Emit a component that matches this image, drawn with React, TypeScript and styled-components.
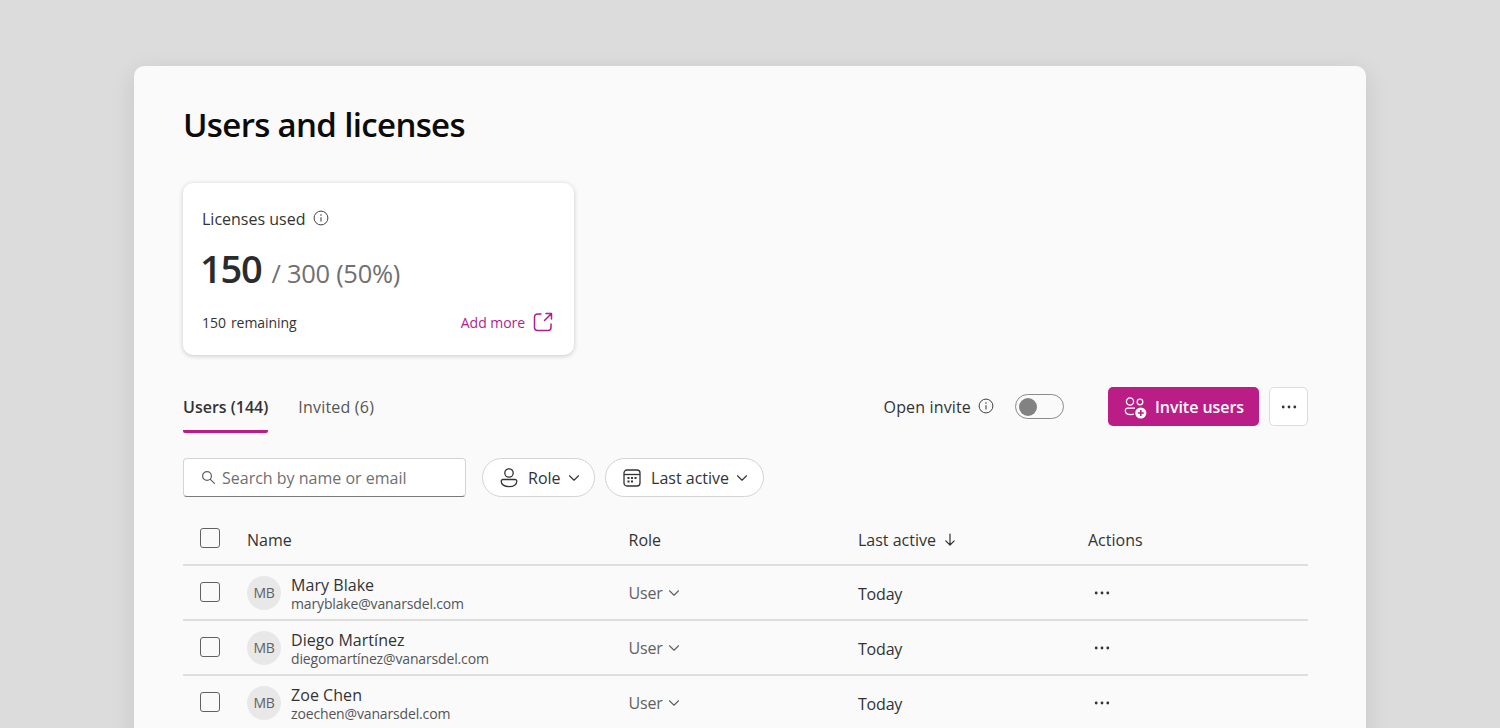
import React from 'react';
import styled, { createGlobalStyle } from 'styled-components';
import { ChevronDown } from 'lucide-react';

const GlobalStyle = createGlobalStyle`
  html, body {
    margin: 0;
    height: 100%;
    overflow: hidden;
    background: #dcdcdc;
  }
  * { box-sizing: border-box; }
  body {
    font-family: "Open Sans", "Noto Sans", "Liberation Sans", sans-serif;
    color: #242424;
  }
`;

const Page = styled.div`
  height: 728px;
  overflow: hidden;
  padding: 66px 134px 0;
`;

const Window = styled.main`
  width: 1232px;
  height: 800px;
  padding: 34px 58px 0 49px;
  background: #fafafa;
  border-radius: 10px;
  box-shadow: 0 6px 24px rgba(0, 0, 0, 0.1);
`;

const Title = styled.h1`
  margin: 0 0 33px;
  height: 50px;
  font-size: 33px;
  line-height: 50px;
  font-weight: 600;
  letter-spacing: -0.65px;
  color: #0b0b0b;
`;

const LicenseCard = styled.section`
  width: 391px;
  height: 172px;
  padding: 24px 21px 0 19px;
  background: #fff;
  border-radius: 10px;
  box-shadow: 0 1px 5px rgba(0, 0, 0, 0.2);
`;

const CardLabel = styled.div`
  display: flex;
  align-items: center;
  gap: 8px;
  height: 24px;
  font-size: 16px;
  letter-spacing: 0;
  color: #333;

  svg {
    margin-top: -2px;
  }
`;

const Figures = styled.div`
  display: flex;
  align-items: baseline;
  gap: 10px;
  height: 54px;
  margin: 14px 0 0 -2px;
  line-height: 46px;
`;

const Big = styled.span`
  font-size: 38px;
  font-weight: 600;
  letter-spacing: -1.2px;
  color: #2b2b2b;
`;

const Total = styled.span`
  font-size: 25.5px;
  font-weight: 400;
  letter-spacing: -0.3px;
  color: #707070;
`;

const CardFooter = styled.div`
  display: flex;
  align-items: center;
  justify-content: space-between;
  height: 24px;
  margin-top: 11px;
  font-size: 14px;
  letter-spacing: -0.05px;
  color: #333;
`;

const Remaining = styled.span`
  word-spacing: 1.5px;
`;

const AddMore = styled.a`
  display: flex;
  align-items: center;
  gap: 8px;
  color: #b01e8c;
`;

const TabBar = styled.div`
  display: flex;
  align-items: flex-start;
  justify-content: space-between;
  height: 46px;
  margin-top: 32px;
`;

const Tabs = styled.nav`
  display: flex;
  gap: 30px;
`;

const Tab = styled.button<{ $active?: boolean }>`
  display: flex;
  align-items: flex-start;
  height: 46px;
  padding: 8px 0 0;
  border: none;
  border-bottom: 3px solid ${(p) => (p.$active ? '#bb1d86' : 'transparent')};
  border-radius: 2px;
  background: none;
  font-family: inherit;
  font-size: 16px;
  line-height: 24px;
  letter-spacing: ${(p) => (p.$active ? '0' : '0.2px')};
  font-weight: ${(p) => (p.$active ? 600 : 400)};
  color: ${(p) => (p.$active ? '#333' : '#555')};
`;

const TabActions = styled.div`
  display: flex;
  align-items: center;
  height: 39px;
`;

const OpenInvite = styled.span`
  display: flex;
  align-items: center;
  gap: 7px;
  margin-right: 21px;
  font-size: 16px;
  letter-spacing: 0.15px;
  color: #333;

  svg {
    margin-top: -2px;
  }
`;

const Toggle = styled.span`
  display: flex;
  align-items: center;
  width: 49px;
  height: 25px;
  padding-left: 3px;
  margin-right: 44px;
  border: 1.5px solid #8a8a8a;
  border-radius: 13px;

  &::before {
    content: '';
    width: 18px;
    height: 18px;
    border-radius: 50%;
    background: #828282;
  }
`;

const InviteButton = styled.button`
  display: flex;
  align-items: center;
  gap: 8px;
  width: 151px;
  height: 39px;
  padding: 0 0 0 15px;
  border: none;
  border-radius: 5px;
  background: #bb1d86;
  color: #fff;
  font-family: inherit;
  font-size: 16px;
  font-weight: 600;
  letter-spacing: -0.05px;
`;

const MoreButton = styled.button`
  display: flex;
  align-items: center;
  justify-content: center;
  width: 39px;
  height: 39px;
  margin-left: 10px;
  padding: 0;
  border: 1px solid #dcdcdc;
  border-radius: 5px;
  background: #fff;
`;

const FilterBar = styled.div`
  display: flex;
  gap: 10px;
  margin-top: 25px;
`;

const SearchBox = styled.label`
  display: flex;
  align-items: center;
  gap: 6px;
  width: 283px;
  height: 39px;
  margin-right: 6px;
  padding-left: 17px;
  background: #fff;
  border: 1px solid #d4d4d4;
  border-bottom: 1.5px solid #7a7a7a;
  border-radius: 4px;
  font-size: 16px;
  letter-spacing: 0;
  color: #707070;
`;

const FilterPill = styled.button`
  display: flex;
  align-items: center;
  gap: 9px;
  height: 39px;
  padding: 0 11.5px 0 16px;
  background: #fff;
  border: 1px solid #d4d4d4;
  border-radius: 20px;
  font-family: inherit;
  font-size: 16px;
  letter-spacing: 0;
  color: #333;

  > svg:last-child {
    margin-left: -5px;
  }
`;

const Table = styled.div`
  margin-top: 24px;
  width: 1125px;
`;

const Row = styled.div<{ $head?: boolean }>`
  display: grid;
  grid-template-columns: 64px 381.5px 229.5px 230px 220px;
  align-items: center;
  height: ${(p) => (p.$head ? '45px' : '55px')};
  padding-bottom: ${(p) => (p.$head ? '6px' : '0')};
  border-bottom: 2px solid #dedede;
`;

const Check = styled.span<{ $lift?: boolean }>`
  display: block;
  width: 20px;
  height: 20px;
  margin-left: 17px;
  margin-top: ${(p) => (p.$lift ? '-3px' : '-1px')};
  border: 1.5px solid #616161;
  border-radius: 3px;
`;

const HeadCell = styled.div`
  display: flex;
  align-items: center;
  gap: 8px;
  font-size: 16px;
  letter-spacing: 0;
  color: #333;
`;

const Person = styled.div`
  display: flex;
  align-items: center;
  gap: 10px;
`;

const Avatar = styled.span`
  display: flex;
  align-items: center;
  justify-content: center;
  width: 34px;
  height: 34px;
  border-radius: 50%;
  background: #e8e8e8;
  font-size: 14px;
  font-weight: 500;
  letter-spacing: -0.2px;
  color: #616161;
`;

const PersonText = styled.div`
  margin-top: 2px;
`;

const PersonName = styled.div`
  font-size: 16px;
  line-height: 20px;
  letter-spacing: 0.05px;
  color: #333;
`;

const PersonMail = styled.div`
  font-size: 14px;
  line-height: 17px;
  letter-spacing: -0.15px;
  color: #555;
`;

const RoleCell = styled.div`
  display: flex;
  align-items: center;
  gap: 2px;
  font-size: 16px;
  letter-spacing: -0.2px;
  color: #616161;
`;

const DateCell = styled.div`
  margin-top: 2px;
  font-size: 16px;
  letter-spacing: -0.2px;
  color: #333;
`;

const ActionCell = styled.div`
  display: flex;
  padding-left: 6px;
  margin-top: 1px;
`;

const InfoIcon = () => (
  <svg width="16" height="16" viewBox="0 0 16 16" fill="none" stroke="#424242">
    <circle cx="8" cy="8" r="6.9" />
    <path d="M8 7.2v4.2" strokeWidth="1.1" />
    <circle cx="8" cy="5" r="0.8" fill="#424242" stroke="none" />
  </svg>
);

const Dots = () => (
  <svg width="16" height="4" viewBox="0 0 16 4" fill="#333">
    <circle cx="2.2" cy="2" r="1.4" />
    <circle cx="8" cy="2" r="1.4" />
    <circle cx="13.8" cy="2" r="1.4" />
  </svg>
);

const Chevron = styled(ChevronDown).attrs({ size: 18, strokeWidth: 1.5 })``;

const users = [
  { name: 'Mary Blake', mail: 'maryblake@vanarsdel.com' },
  { name: 'Diego Martínez', mail: 'diegomartínez@vanarsdel.com' },
  { name: 'Zoe Chen', mail: 'zoechen@vanarsdel.com' },
];

function App() {
  return (
    <Page>
      <GlobalStyle />
      <Window>
        <Title>Users and licenses</Title>

        <LicenseCard>
          <CardLabel>
            Licenses used <InfoIcon />
          </CardLabel>
          <Figures>
            <Big>150</Big>
            <Total>/ 300 (50%)</Total>
          </Figures>
          <CardFooter>
            <Remaining>150 remaining</Remaining>
            <AddMore>
              Add more
              <svg width="20" height="20" viewBox="0 0 20 20" fill="none" stroke="#b01e8c" strokeWidth="1.5" strokeLinecap="round" strokeLinejoin="round">
                <path d="M8 2H4.5A3 3 0 0 0 1.5 5v10.5a3 3 0 0 0 3 3h10.5a3 3 0 0 0 3-3V12" />
                <path d="M13 1.5h5.5V7M18.5 1.5 11.5 8.5" />
              </svg>
            </AddMore>
          </CardFooter>
        </LicenseCard>

        <TabBar>
          <Tabs>
            <Tab $active>Users (144)</Tab>
            <Tab>Invited (6)</Tab>
          </Tabs>
          <TabActions>
            <OpenInvite>
              Open invite <InfoIcon />
            </OpenInvite>
            <Toggle />
            <InviteButton>
              <svg width="24" height="24" viewBox="0 0 24 24" fill="none" stroke="#fff" strokeWidth="1.3">
                <circle cx="7" cy="6.5" r="3.6" />
                <circle cx="17" cy="7" r="2.8" />
                <path d="M12 13.2H4.5a2.2 2.2 0 0 0-2.2 2.2c0 2.4 2.2 4.2 5.6 4.2 1 0 2-.1 3-.4" />
                <circle cx="17.8" cy="18" r="5.6" fill="#fff" stroke="none" />
                <path d="M17.8 15v6M14.8 18h6" stroke="#bb1d86" strokeWidth="1.6" />
              </svg>
              Invite users
            </InviteButton>
            <MoreButton>
              <Dots />
            </MoreButton>
          </TabActions>
        </TabBar>

        <FilterBar>
          <SearchBox>
            <svg width="15" height="15" viewBox="0 0 15 15" fill="none" stroke="#616161" strokeWidth="1.2" strokeLinecap="round">
              <circle cx="6" cy="6" r="4.4" />
              <path d="M9.4 9.4 13.4 13.4" />
            </svg>
            Search by name or email
          </SearchBox>
          <FilterPill>
            <svg width="20" height="22" viewBox="0 0 20 22" fill="none" stroke="#333" strokeWidth="1.3">
              <circle cx="10" cy="6" r="4.2" />
              <path d="M4 12.5h12a1.8 1.8 0 0 1 1.8 1.8c0 3-3 5.4-7.8 5.4s-7.8-2.4-7.8-5.4A1.8 1.8 0 0 1 4 12.5z" />
            </svg>
            Role
            <Chevron />
          </FilterPill>
          <FilterPill>
            <svg width="20" height="20" viewBox="0 0 20 20" fill="none" stroke="#333" strokeWidth="1.3">
              <rect x="2" y="2" width="16" height="16" rx="3" />
              <path d="M2 6.5h16" />
              <g fill="#333" stroke="none">
                <rect x="5.5" y="9" width="2" height="2" />
                <rect x="9" y="9" width="2" height="2" />
                <rect x="12.5" y="9" width="2" height="2" />
                <rect x="5.5" y="12.5" width="2" height="2" />
                <rect x="9" y="12.5" width="2" height="2" />
              </g>
            </svg>
            Last active
            <Chevron />
          </FilterPill>
        </FilterBar>

        <Table>
          <Row $head>
            <Check $lift />
            <HeadCell>Name</HeadCell>
            <HeadCell>Role</HeadCell>
            <HeadCell>
              Last active
              <svg width="12" height="13" viewBox="0 0 12 13" fill="none" stroke="#333" strokeWidth="1.2" strokeLinecap="round" strokeLinejoin="round">
                <path d="M6 1v11M1.8 7.8 6 12l4.2-4.2" />
              </svg>
            </HeadCell>
            <HeadCell>Actions</HeadCell>
          </Row>
          {users.map((u) => (
            <Row key={u.mail}>
              <Check />
              <Person>
                <Avatar>MB</Avatar>
                <PersonText>
                  <PersonName>{u.name}</PersonName>
                  <PersonMail>{u.mail}</PersonMail>
                </PersonText>
              </Person>
              <RoleCell>
                User
                <Chevron />
              </RoleCell>
              <DateCell>Today</DateCell>
              <ActionCell>
                <Dots />
              </ActionCell>
            </Row>
          ))}
        </Table>
      </Window>
    </Page>
  );
}

export default App;
